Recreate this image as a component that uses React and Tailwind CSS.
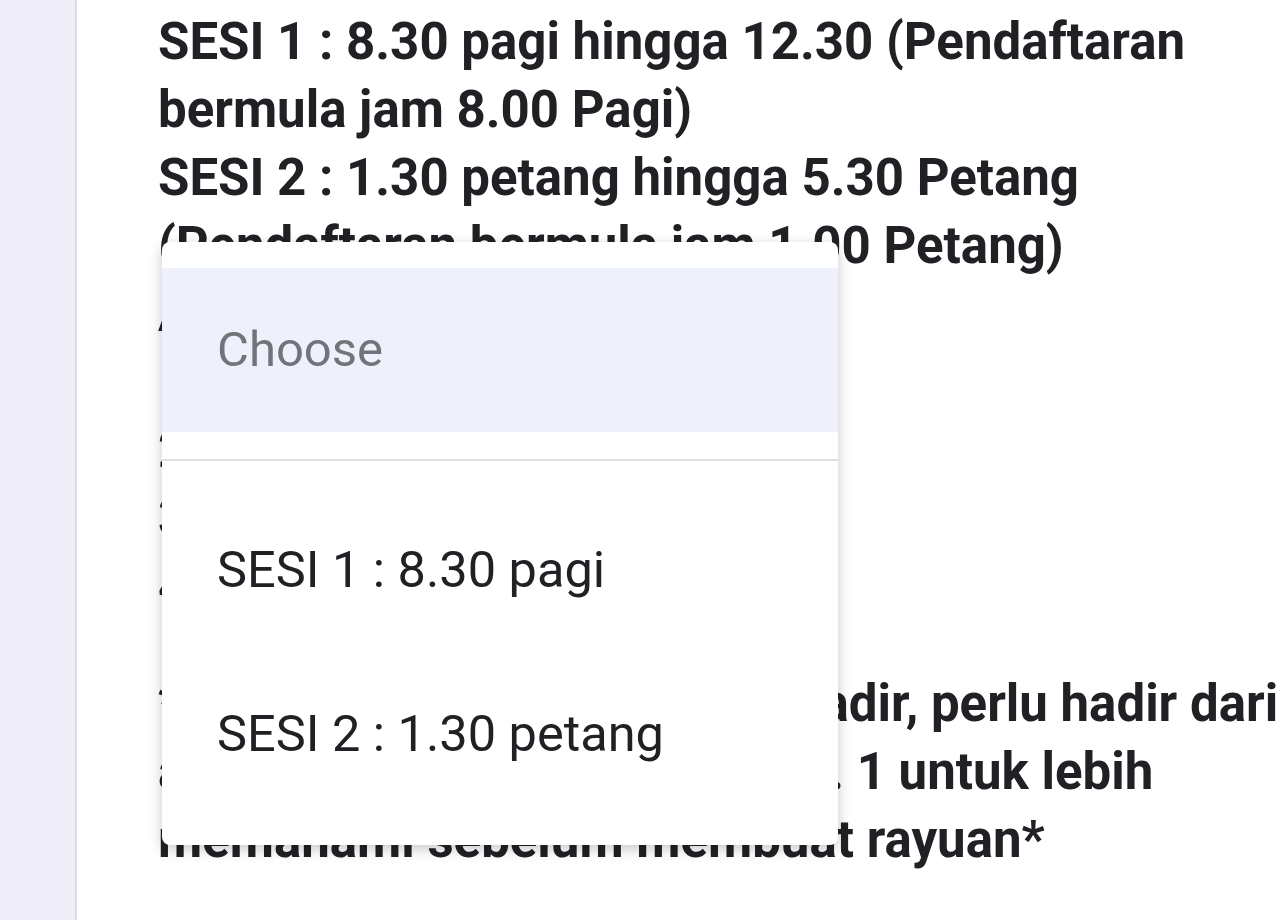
import React from "react";

const boldLines = [
  "SESI 1 : 8.30 pagi hingga 12.30 (Pendaftaran",
  "bermula jam 8.00 Pagi)",
  "SESI 2 : 1.30 petang hingga 5.30 Petang",
  "(Pendaftaran bermula jam 1.00 Petang)",
  "AGENDA PROGRAM:",
  "1. Taklimat pendaftaran",
  "2. Penerangan syarat",
  "3. Sesi soal jawab",
  "4. Rayuan",
];

const tailLines = [
  "*Sekiranya wali tidak dapat hadir, perlu hadir dari",
  "awal program sila rujuk ke no. 1 untuk lebih",
  "memahami sebelum membuat rayuan*",
];

export default function App() {
  return (
    <div className="relative flex h-[920px] w-[1280px] overflow-hidden bg-white" style={{ fontFamily: "Roboto, 'Noto Sans', sans-serif" }}>
      <div className="h-full w-[75px] shrink-0 bg-[#efedf7]" />
      <div className="h-full w-[2px] shrink-0 bg-[#dcdbe3]" />
      <div className="flex-1 pl-[81px] pt-[8px] text-[51px] font-bold leading-[68px] text-[#202124]">
        {boldLines.map((l, i) => (
          <div key={i} className="whitespace-nowrap">{l}</div>
        ))}
        <div className="mt-[50px]">
          {tailLines.map((l, i) => (
            <div key={i} className="whitespace-nowrap">{l}</div>
          ))}
        </div>
      </div>

      <div className="absolute left-[162px] top-[242px] flex h-[603px] w-[676px] flex-col rounded-[8px] bg-white pt-[26px] shadow-[0_4px_14px_rgba(0,0,0,0.22)]">
        <div className="flex h-[164px] items-center bg-[#eef1fc] pl-[55px] text-[49px] text-[#70757a]">
          Choose
        </div>
        <div className="my-[27px] h-[2px] bg-[#e0e0e0]" />
        <div className="flex h-[164px] items-center pl-[55px] text-[50.5px] text-[#202124]">
          SESI 1 : 8.30 pagi
        </div>
        <div className="flex h-[164px] items-center pl-[55px] text-[50.5px] text-[#202124]">
          SESI 2 : 1.30 petang
        </div>
      </div>
    </div>
  );
}
